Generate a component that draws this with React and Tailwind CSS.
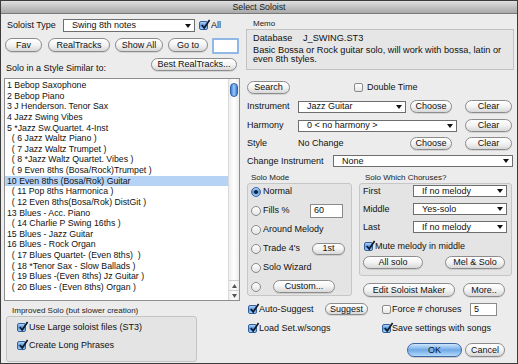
const soloists = [
  "1 Bebop Saxophone",
  "2 Bebop Piano",
  "3 J Henderson. Tenor Sax",
  "4 Jazz Swing Vibes",
  "5 *Jazz Sw.Quartet. 4-Inst",
  "  ( 6 Jazz Waltz Piano )",
  "  ( 7 Jazz Waltz Trumpet )",
  "  ( 8 *Jazz Waltz Quartet. Vibes )",
  "  ( 9 Even 8ths (Bosa/Rock)Trumpet )",
  "10 Even 8ths (Bosa/Rok) Guitar",
  "  ( 11 Pop 8ths Harmonica )",
  "  ( 12 Even 8ths(Bosa/Rok) DistGit )",
  "13 Blues - Acc. Piano",
  "  ( 14 Charlie P Swing 16ths )",
  "15 Blues - Jazz Guitar",
  "16 Blues - Rock Organ",
  "  ( 17 Blues Quartet- (Even 8ths)  )",
  "  ( 18 *Tenor Sax - Slow Ballads )",
  "  ( 19 Blues -(Even 8ths) Jz Guitar )",
  "  ( 20 Blues - (Even 8ths) Organ )",
];

function Btn({ className = "", children }) {
  return (
    <div
      className={
        "flex items-center justify-center shrink-0 rounded-full border border-[#8c8c8c] bg-linear-to-b from-white via-[#f3f3f3] to-[#d8d8d8] shadow-[0_1px_0_rgba(0,0,0,0.1)] whitespace-nowrap text-[#111] " +
        className
      }
    >
      {children}
    </div>
  );
}

function OkBtn({ className = "", children }) {
  return (
    <div
      className={
        "flex items-center justify-center shrink-0 rounded-full border border-[#3d66a3] bg-linear-to-b from-[#cfe6fc] via-[#6fa9e6] to-[#b3dbfa] shadow-[0_1px_0_rgba(0,0,0,0.15)] whitespace-nowrap text-[#0a1428] " +
        className
      }
    >
      {children}
    </div>
  );
}

function Select({ className = "", children }) {
  return (
    <div
      className={
        "flex items-center shrink-0 bg-white border border-[#6e6e6e] pl-[8px] pr-[3px] whitespace-nowrap " +
        className
      }
    >
      <span className="flex-1">{children}</span>
      <svg width="6" height="4" viewBox="0 0 6 4">
        <path d="M0 0h6L3 4z" fill="#111" />
      </svg>
    </div>
  );
}

function Check({ on }) {
  if (!on) {
    return (
      <span className="w-[9px] h-[9px] shrink-0 rounded-[2px] border border-[#8a8a8a] bg-linear-to-b from-white to-[#e6e6e6]" />
    );
  }
  return (
    <span className="relative w-[9px] h-[9px] shrink-0 rounded-[2px] border border-[#34609f] bg-linear-to-b from-[#b0d3f6] via-[#5a96dc] to-[#a2d2f9]">
      <svg className="absolute -top-[3px] left-[0px]" width="11" height="11" viewBox="0 0 11 11">
        <path d="M1.8 6l2.4 3L9.6 1" stroke="#0d1a30" strokeWidth="1.7" fill="none" />
      </svg>
    </span>
  );
}

function Radio({ on }) {
  if (!on) {
    return (
      <span className="w-[10px] h-[10px] shrink-0 rounded-full border border-[#8a8a8a] bg-linear-to-b from-white to-[#e4e4e4]" />
    );
  }
  return (
    <span className="flex items-center justify-center w-[10px] h-[10px] shrink-0 rounded-full border border-[#3a63a0] bg-linear-to-b from-[#b0d3f6] via-[#5a96dc] to-[#a5d3f9]">
      <span className="w-[4px] h-[4px] rounded-full bg-[#10223e]" />
    </span>
  );
}

export default function App() {
  return (
    <div className="w-[518px] h-[364px] flex flex-col overflow-hidden border border-[#3c3c3c] bg-[#ececec] font-['Liberation_Sans',Arial,sans-serif] text-[9px] leading-none text-[#111]">
      {/* Title bar */}
      <div className="h-[13px] shrink-0 flex items-center justify-center border-b border-[#7a7a7a] bg-linear-to-b from-[#e0e0e0] to-[#a8a8a8] text-[8.75px] text-[#1a1a1a]">
        Select Soloist
      </div>

      <div className="flex flex-1">
        {/* Left column */}
        <div className="w-[240px] pl-[3px] flex flex-col">
          <div className="flex items-center h-[13px] mt-[5px]">
            <span className="w-[59px] pl-[3px]">Soloist Type</span>
            <Select className="w-[132px] h-[13px]">Swing 8th notes</Select>
            <span className="ml-[4px] flex"><Check on /></span>
            <span className="ml-[3px]">All</span>
          </div>

          <div className="flex items-start mt-[6px]">
            <Btn className="ml-[1px] w-[37px] h-[14px]">Fav</Btn>
            <Btn className="ml-[6px] w-[62px] h-[14px]">RealTracks</Btn>
            <Btn className="ml-[5px] w-[48px] h-[14px]">Show All</Btn>
            <Btn className="ml-[5px] w-[40px] h-[14px]">Go to</Btn>
            <div className="ml-[4px] w-[27px] h-[16px] border-2 border-[#8fb8e6] bg-white rounded-[1px]" />
          </div>

          <div className="flex justify-between mt-[4px]">
            <span className="ml-[2px] mt-[6px]">Solo in a Style Similar to:</span>
            <Btn className="w-[86px] h-[13px] mr-[4px]">Best RealTracks...</Btn>
          </div>

          {/* List */}
          <div className="mt-[5px] w-[236px] h-[223px] border border-[#8e8e8e] bg-white flex">
            <div className="flex-1 pt-[1px]">
              {soloists.map((t, i) => (
                <div
                  key={i}
                  className={
                    "h-[10.63px] leading-[10.63px] pl-[2px] whitespace-pre text-[8.75px] " +
                    (i === 9 ? "bg-[#b6d3f5]" : "")
                  }
                >
                  {t}
                </div>
              ))}
            </div>
            <div className="w-[11px] flex flex-col border-l border-[#dadada] bg-linear-to-r from-[#eeeeee] via-white to-[#ececec]">
              <div className="mx-auto mt-[4px] w-[8px] h-[14px] rounded-full border border-[#2f5fa8] bg-linear-to-r from-[#3f7fd8] via-[#9ccaf8] to-[#3a79d2]" />
              <div className="flex-1" />
              <div className="h-[10px] flex items-center justify-center border-t border-[#cfcfcf]">
                <svg width="5" height="4" viewBox="0 0 5 4"><path d="M0 4h5L2.5 0z" fill="#555" /></svg>
              </div>
              <div className="h-[10px] flex items-center justify-center border-t border-[#cfcfcf]">
                <svg width="5" height="4" viewBox="0 0 5 4"><path d="M0 0h5L2.5 4z" fill="#555" /></svg>
              </div>
            </div>
          </div>

          <div className="mt-[5px] ml-[8px] text-[8px] leading-[10px] text-[#222]">
            Improved Solo (but slower creation)
          </div>
          <div className="ml-[2px] w-[191px] h-[46px] border border-[#c4c4c4] bg-[#e4e4e4] rounded-[3px] flex flex-col pl-[10px] pt-[5px] gap-[8px]">
            <div className="flex items-center h-[10px]">
              <Check on />
              <span className="ml-[3px]">Use Large soloist files (ST3)</span>
            </div>
            <div className="flex items-center h-[10px]">
              <Check on />
              <span className="ml-[3px]">Create Long Phrases</span>
            </div>
          </div>
        </div>

        {/* Right column */}
        <div className="w-[268px] ml-[5px] flex flex-col">
          <div className="mt-[5px] pl-[7px] text-[8px] leading-[10px] text-[#222]">Memo</div>
          <div className="h-[41px] border border-[#c2c2c2] bg-[#e6e6e6] pl-[6px] pt-[4px] text-[9.2px]">
            <div className="flex items-center h-[10px]">
              <span className="w-[50px]">Database</span>
              <span>J_SWING.ST3</span>
            </div>
            <div className="mt-[2px] whitespace-nowrap">
              <div className="h-[9.4px] leading-[9.2px]">
                Basic Bossa or Rock guitar solo, will work with bossa, latin or
              </div>
              <div className="h-[9.4px] leading-[9.2px]">even 8th styles.</div>
            </div>
          </div>

          <div className="mt-[11px] flex items-center h-[13px]">
            <Btn className="ml-[1px] w-[43px] h-[13px]">Search</Btn>
            <span className="ml-[64px] flex"><Check /></span>
            <span className="ml-[4px]">Double Time</span>
          </div>

          <div className="mt-[6px] flex items-center h-[13px]">
            <span className="w-[52px] pl-[1px]">Instrument</span>
            <Select className="w-[108px] h-[12px]">Jazz Guitar</Select>
            <Btn className="ml-[4px] w-[42px] h-[13px]">Choose</Btn>
            <Btn className="ml-[13px] w-[47px] h-[13px]">Clear</Btn>
          </div>

          <div className="mt-[6px] flex items-center h-[13px]">
            <span className="w-[52px] pl-[1px]">Harmony</span>
            <Select className="w-[159px] h-[12px]">0 &lt; no harmony &gt;</Select>
            <Btn className="ml-[8px] w-[47px] h-[13px]">Clear</Btn>
          </div>

          <div className="mt-[5px] flex items-center h-[13px]">
            <span className="w-[52px] pl-[1px]">Style</span>
            <span className="w-[112px]">No Change</span>
            <Btn className="w-[42px] h-[13px]">Choose</Btn>
            <Btn className="ml-[13px] w-[47px] h-[13px]">Clear</Btn>
          </div>

          <div className="mt-[5px] flex items-center h-[12px]">
            <span className="w-[87px] pl-[1px]">Change Instrument</span>
            <Select className="w-[180px] h-[12px]">None</Select>
          </div>

          <div className="mt-[5px] flex">
            {/* Solo Mode */}
            <div className="ml-[1px] w-[105px] flex flex-col">
              <div className="h-[11px] flex items-center pl-[4px] text-[8px] text-[#222]">Solo Mode</div>
              <div className="h-[113px] border border-[#c6c6c6] bg-[#e4e4e4] rounded-[3px] flex flex-col gap-[4px] pl-[3px]">
                <div className="h-[15px] flex items-center">
                  <Radio on />
                  <span className="ml-[2px]">Normal</span>
                </div>
                <div className="h-[15px] flex items-center">
                  <Radio />
                  <span className="ml-[2px] w-[47px]">Fills %</span>
                  <div className="w-[33px] h-[14px] border border-[#8a8a8a] bg-white flex items-center pl-[3px]">60</div>
                </div>
                <div className="h-[15px] flex items-center">
                  <Radio />
                  <span className="ml-[2px]">Around Melody</span>
                </div>
                <div className="h-[15px] flex items-center">
                  <Radio />
                  <span className="ml-[2px] w-[49px]">Trade 4's</span>
                  <Btn className="w-[33px] h-[12px]">1st</Btn>
                </div>
                <div className="h-[15px] flex items-center">
                  <Radio />
                  <span className="ml-[2px]">Solo Wizard</span>
                </div>
                <div className="h-[15px] flex items-center">
                  <Radio />
                  <Btn className="ml-[12px] w-[62px] h-[13px]">Custom...</Btn>
                </div>
              </div>
            </div>

            {/* Solo Which Choruses */}
            <div className="ml-[7px] w-[153px] flex flex-col">
              <div className="h-[11px] flex items-center pl-[6px] text-[8px] text-[#222]">Solo Which Choruses?</div>
              <div className="h-[93px] border border-[#c6c6c6] bg-[#e4e4e4] rounded-[3px] flex flex-col pl-[3px] pt-[1px]">
                <div className="flex flex-col gap-[6px]">
                  <div className="flex items-center h-[12px]">
                    <span className="w-[50px]">First</span>
                    <Select className="w-[94px] h-[12px]">If no melody</Select>
                  </div>
                  <div className="flex items-center h-[12px]">
                    <span className="w-[50px]">Middle</span>
                    <Select className="w-[94px] h-[12px]">Yes-solo</Select>
                  </div>
                  <div className="flex items-center h-[12px]">
                    <span className="w-[50px]">Last</span>
                    <Select className="w-[94px] h-[12px]">If no melody</Select>
                  </div>
                </div>
                <div className="mt-[8px] flex items-center h-[10px] ml-[1px]">
                  <Check on />
                  <span className="ml-[2px]">Mute melody in middle</span>
                </div>
                <div className="mt-[5px] flex">
                  <Btn className="w-[60px] h-[13px]">All solo</Btn>
                  <Btn className="ml-[22px] w-[60px] h-[13px]">Mel &amp; Solo</Btn>
                </div>
              </div>
              <div className="mt-[7px] flex">
                <Btn className="ml-[4px] w-[92px] h-[14px]">Edit Soloist Maker</Btn>
                <Btn className="ml-[8px] w-[42px] h-[14px]">More..</Btn>
              </div>
            </div>
          </div>

          <div className="mt-[6px] flex items-center h-[12px]">
            <span className="ml-[2px] flex"><Check on /></span>
            <span className="ml-[2px] w-[66px]">Auto-Suggest</span>
            <Btn className="w-[43px] h-[12px]">Suggest</Btn>
            <span className="ml-[14px] flex"><Check /></span>
            <span className="ml-[1px] w-[78px]">Force # choruses</span>
            <div className="w-[27px] h-[13px] border border-[#8a8a8a] bg-white flex items-center pl-[3px]">5</div>
          </div>

          <div className="mt-[7px] flex items-center h-[12px]">
            <span className="ml-[2px] flex"><Check on /></span>
            <span className="ml-[2px] w-[123px]">Load Set.w/songs</span>
            <Check on />
            <span className="ml-[1px]">Save settings with songs</span>
          </div>

          <div className="mt-[9px] flex justify-end pr-[9px] gap-[3px]">
            <OkBtn className="w-[55px] h-[14px]">OK</OkBtn>
            <Btn className="w-[40px] h-[14px]">Cancel</Btn>
          </div>
        </div>
      </div>
    </div>
  );
}
